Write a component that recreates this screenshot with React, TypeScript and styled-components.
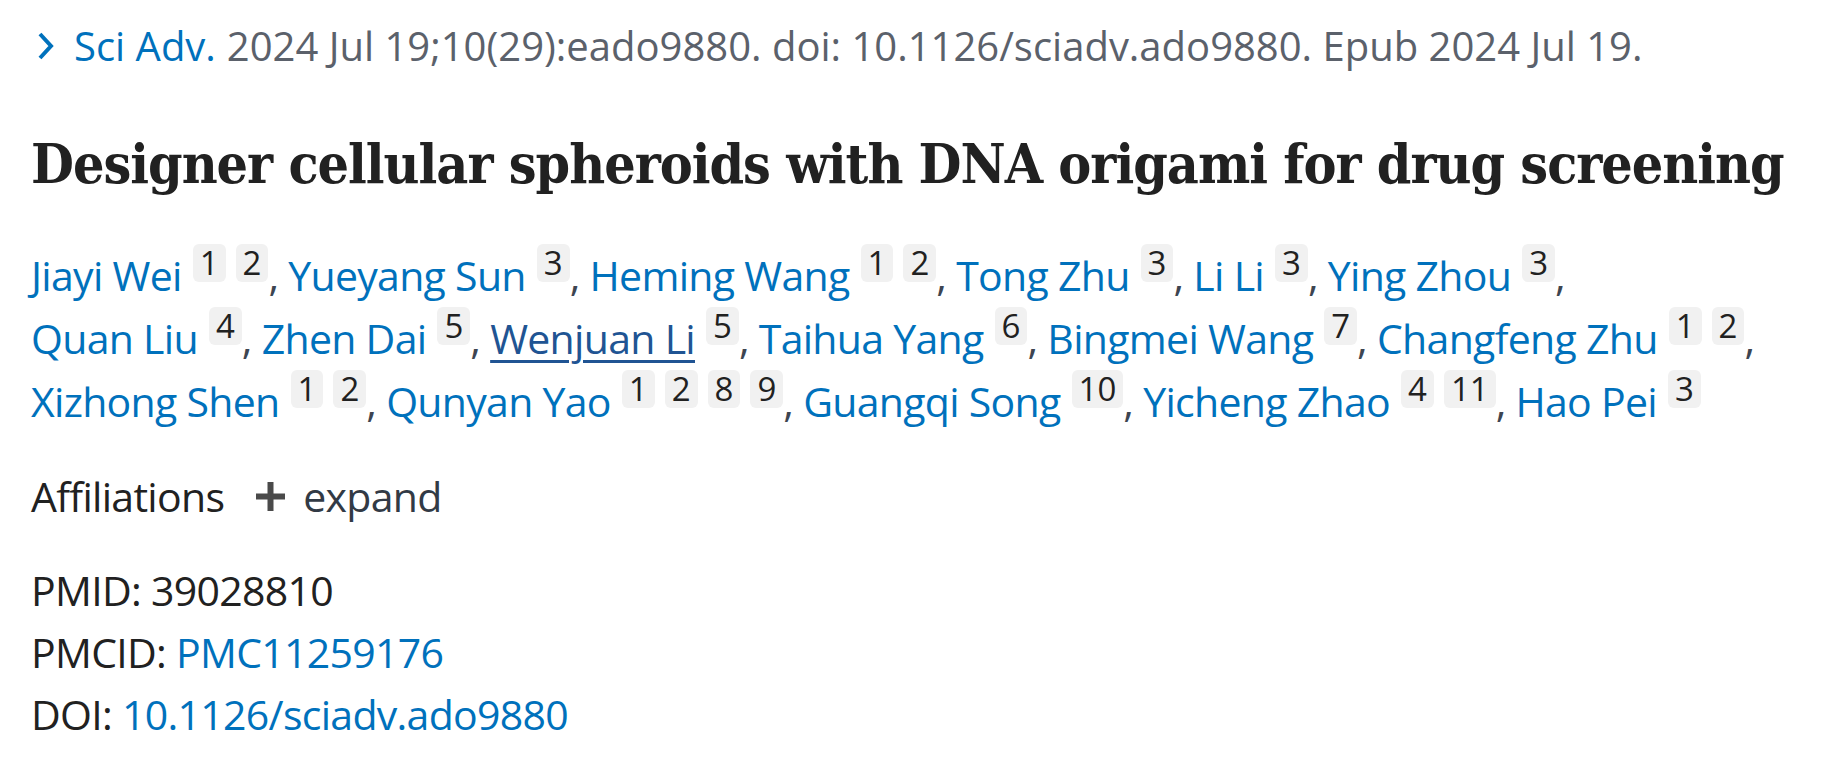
import React from "react";
import styled, { createGlobalStyle } from "styled-components";

const GlobalStyle = createGlobalStyle`
    body {
        margin: 0;
        padding: 0;
        background: #ffffff;
        font-family: "Open Sans", "Noto Sans", sans-serif;
    }
`;

const PageSC = styled.div`
    padding: 22px 0 0 31px;
    color: #212121;
`;

const CitationSC = styled.div`
    display: flex;
    align-items: center;
    font-size: 40px;
    line-height: 48px;
    color: #5b616b;
    white-space: nowrap;
`;

const ChevronSC = styled.svg`
    width: 20px;
    height: 30px;
    margin: 0 18px 0 5px;
    flex: none;
`;

const JournalSC = styled.span`
    color: #0071bc;
    margin-right: 11px;
`;

const TitleSC = styled.h1`
    margin: 62px 0 0;
    font-family: "DejaVu Serif", "Liberation Serif", serif;
    font-stretch: semi-condensed;
    font-weight: 700;
    font-size: 55px;
    line-height: 64px;
    letter-spacing: -1px;
    color: #212121;
    white-space: nowrap;
`;

const AuthorsSC = styled.div`
    margin-top: 48px;
    width: 1739px;
    font-size: 41px;
    line-height: 63px;
    letter-spacing: -0.7px;
`;

const AuthorSC = styled.span`
    white-space: nowrap;
`;

const NameSC = styled.a<{ $active?: boolean }>`
    color: ${(p) => (p.$active ? "#205493" : "#0071bc")};
    text-decoration: ${(p) => (p.$active ? "underline" : "none")};
    text-decoration-thickness: 3px;
    text-underline-offset: 6px;
    margin-right: 1px;
`;

const BadgeSC = styled.span`
    display: inline-block;
    height: 38px;
    line-height: 38px;
    padding: 0 7px;
    margin-left: 10px;
    border-radius: 6px;
    background: #f1f1f1;
    color: #212121;
    font-size: 33px;
    letter-spacing: 0;
    vertical-align: 16px;
`;

const CommaSC = styled.span`
    color: #3d4551;
`;

const AffiliationsSC = styled.div`
    margin-top: 32px;
    display: flex;
    align-items: center;
    font-size: 41px;
    line-height: 63px;
    letter-spacing: -0.7px;
    color: #212121;
`;

const ExpandSC = styled.span`
    display: inline-flex;
    align-items: center;
    margin-left: 32px;
    color: #323a45;
    gap: 18px;
`;

const IdsSC = styled.div`
    margin-top: 31px;
    font-size: 41px;
    line-height: 62px;
    letter-spacing: -0.7px;
    color: #212121;
`;

const IdRowSC = styled.div``;

const LinkSC = styled.a`
    color: #0071bc;
    text-decoration: none;
`;

type Author = { name: string; refs: number[]; active?: boolean };

const authors: Author[] = [
    { name: "Jiayi Wei", refs: [1, 2] },
    { name: "Yueyang Sun", refs: [3] },
    { name: "Heming Wang", refs: [1, 2] },
    { name: "Tong Zhu", refs: [3] },
    { name: "Li Li", refs: [3] },
    { name: "Ying Zhou", refs: [3] },
    { name: "Quan Liu", refs: [4] },
    { name: "Zhen Dai", refs: [5] },
    { name: "Wenjuan Li", refs: [5], active: true },
    { name: "Taihua Yang", refs: [6] },
    { name: "Bingmei Wang", refs: [7] },
    { name: "Changfeng Zhu", refs: [1, 2] },
    { name: "Xizhong Shen", refs: [1, 2] },
    { name: "Qunyan Yao", refs: [1, 2, 8, 9] },
    { name: "Guangqi Song", refs: [10] },
    { name: "Yicheng Zhao", refs: [4, 11] },
    { name: "Hao Pei", refs: [3] },
];

export default function App() {
    return (
        <PageSC>
            <GlobalStyle />
            <CitationSC>
                <ChevronSC viewBox="0 0 20 30">
                    <path d="M4 3 L15 15 L4 27" fill="none" stroke="#0071bc" strokeWidth="4" />
                </ChevronSC>
                <JournalSC>Sci Adv.</JournalSC>
                2024 Jul 19;10(29):eado9880. doi: 10.1126/sciadv.ado9880. Epub 2024 Jul 19.
            </CitationSC>
            <TitleSC>Designer cellular spheroids with DNA origami for drug screening</TitleSC>
            <AuthorsSC>
                {authors.map((a, i) => (
                    <React.Fragment key={a.name}>
                        <AuthorSC>
                            <NameSC $active={a.active}>{a.name}</NameSC>
                            {a.refs.map((r) => (
                                <BadgeSC key={r}>{r}</BadgeSC>
                            ))}
                            {i < authors.length - 1 && <CommaSC>,</CommaSC>}
                        </AuthorSC>{" "}
                    </React.Fragment>
                ))}
            </AuthorsSC>
            <AffiliationsSC>
                Affiliations
                <ExpandSC>
                    <svg width="29" height="29" viewBox="0 0 29 29">
                        <rect x="0" y="11.5" width="29" height="6" fill="#4a4a4a" />
                        <rect x="11.5" y="0" width="6" height="29" fill="#4a4a4a" />
                    </svg>
                    expand
                </ExpandSC>
            </AffiliationsSC>
            <IdsSC>
                <IdRowSC>PMID: 39028810</IdRowSC>
                <IdRowSC>
                    PMCID: <LinkSC>PMC11259176</LinkSC>
                </IdRowSC>
                <IdRowSC>
                    DOI: <LinkSC>10.1126/sciadv.ado9880</LinkSC>
                </IdRowSC>
            </IdsSC>
        </PageSC>
    );
}
